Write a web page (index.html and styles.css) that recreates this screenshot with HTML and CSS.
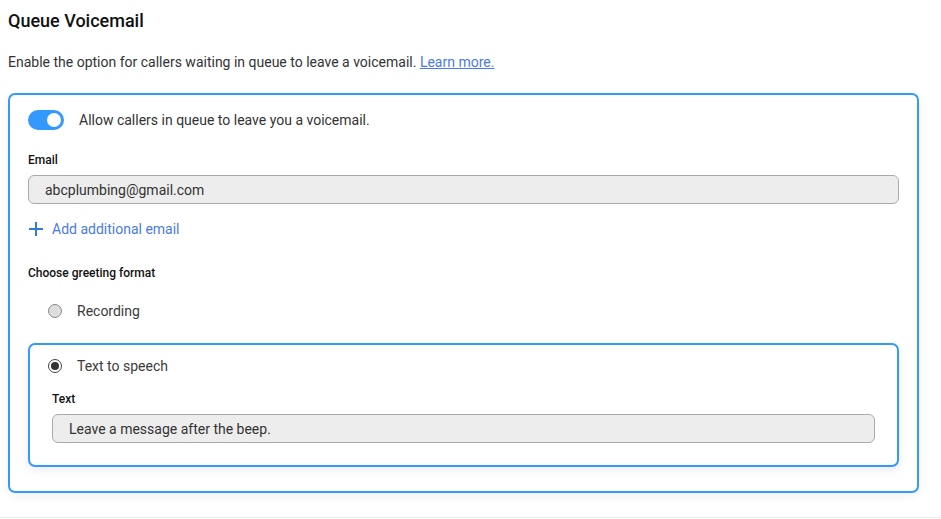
FILE: index.html
```html
<!DOCTYPE html>
<html lang="en">
<head>
<meta charset="utf-8">
<title>Queue Voicemail</title>
<link rel="stylesheet" href="styles.css">
</head>
<body>
<div class="page">
  <h1 class="title">Queue Voicemail</h1>
  <p class="desc">Enable the option for callers waiting in queue to leave a voicemail. <a href="#" class="link">Learn more.</a></p>

  <div class="card">
    <div class="toggle-row">
      <span class="toggle"><span class="knob"></span></span>
      <span class="toggle-label">Allow callers in queue to leave you a voicemail.</span>
    </div>

    <div class="label label-email">Email</div>
    <div class="input">abcplumbing@gmail.com</div>

    <div class="add-row">
      <svg class="plus" width="16" height="16" viewBox="0 0 16 16"><path d="M8 1v14M1 8h14" stroke="#2f7bd9" stroke-width="2" fill="none"/></svg>
      <span class="add-text">Add additional email</span>
    </div>

    <div class="label label-greeting">Choose greeting format</div>

    <div class="radio-row radio-outer">
      <span class="radio"></span>
      <span class="radio-label">Recording</span>
    </div>

    <div class="inner-card">
      <div class="radio-row radio-inner">
        <span class="radio checked"><span class="dot"></span></span>
        <span class="radio-label">Text to speech</span>
      </div>
      <div class="label label-text">Text</div>
      <div class="input">Leave a message after the beep.</div>
    </div>
  </div>
</div>
<div class="footer-line"></div>
</body>
</html>
```

FILE: styles.css
```css
html, body {
  margin: 0;
  padding: 0;
  background: #fff;
}
body {
  font-family: Roboto, "Liberation Sans", Arial, sans-serif;
  color: #333;
  height: 519px;
  overflow: hidden;
  position: relative;
}
.page {
  padding: 0 22px 0 8px;
}
.title {
  margin: 9px 0 0;
  font-size: 18px;
  line-height: 24px;
  font-weight: 500;
  color: #111;
}
.desc {
  margin: 19px 0 0;
  font-size: 14px;
  line-height: 20px;
  color: #333;
}
.link {
  color: #4a7be0;
  text-decoration: underline;
}
.card {
  margin-top: 21px;
  border: 2px solid #3399ff;
  border-radius: 7px;
  padding: 15px 18px 24px;
  box-shadow: 0 3px 10px rgba(0, 0, 0, 0.06);
}
.toggle-row {
  display: flex;
  align-items: center;
  height: 20px;
}
.toggle {
  width: 36px;
  height: 20px;
  border-radius: 10px;
  background: #3399ff;
  display: flex;
  align-items: center;
  justify-content: flex-end;
  padding: 0 3px;
  box-sizing: border-box;
}
.knob {
  width: 14px;
  height: 14px;
  border-radius: 50%;
  background: #fff;
}
.toggle-label {
  margin-left: 15px;
  font-size: 14px;
  line-height: 20px;
  color: #333;
}
.label {
  font-size: 12px;
  line-height: 16px;
  font-weight: 500;
  color: #111;
}
.label-email {
  margin-top: 22px;
}
.input {
  margin-top: 7px;
  height: 29px;
  box-sizing: border-box;
  border: 1px solid #aaa;
  border-radius: 6px;
  background: #ededed;
  padding: 1px 16px 0;
  font-size: 14px;
  line-height: 27px;
  color: #333;
}
.add-row {
  margin-top: 15px;
  display: flex;
  align-items: center;
  height: 20px;
}
.plus {
  display: block;
}
.add-text {
  margin-left: 8px;
  font-size: 14px;
  line-height: 20px;
  color: #4a7be0;
}
.label-greeting {
  margin-top: 26px;
}
.radio-row {
  display: flex;
  align-items: center;
  height: 20px;
}
.radio-outer {
  margin-top: 20px;
  padding-left: 20px;
}
.radio {
  width: 14px;
  height: 14px;
  box-sizing: border-box;
  border-radius: 50%;
  border: 1px solid #8a8a8a;
  background: #ddd;
  display: flex;
  align-items: center;
  justify-content: center;
}
.radio.checked {
  border: 1px solid #444;
  background: #fff;
}
.dot {
  width: 8px;
  height: 8px;
  border-radius: 50%;
  background: #333;
}
.radio-label {
  margin-left: 15px;
  font-size: 14px;
  line-height: 20px;
  color: #3a3a3a;
}
.inner-card {
  margin-top: 22px;
  border: 2px solid #3399ff;
  border-radius: 7px;
  padding: 11px 22px 22px;
  box-shadow: 0 3px 10px rgba(0, 0, 0, 0.08);
}
.radio-inner {
  margin-left: -4px;
}
.label-text {
  margin-top: 15px;
}
.inner-card .input {
  margin-top: 7px;
}
.footer-line {
  position: absolute;
  left: 0;
  right: 0;
  top: 517px;
  height: 1px;
  background: #eee;
}
```
